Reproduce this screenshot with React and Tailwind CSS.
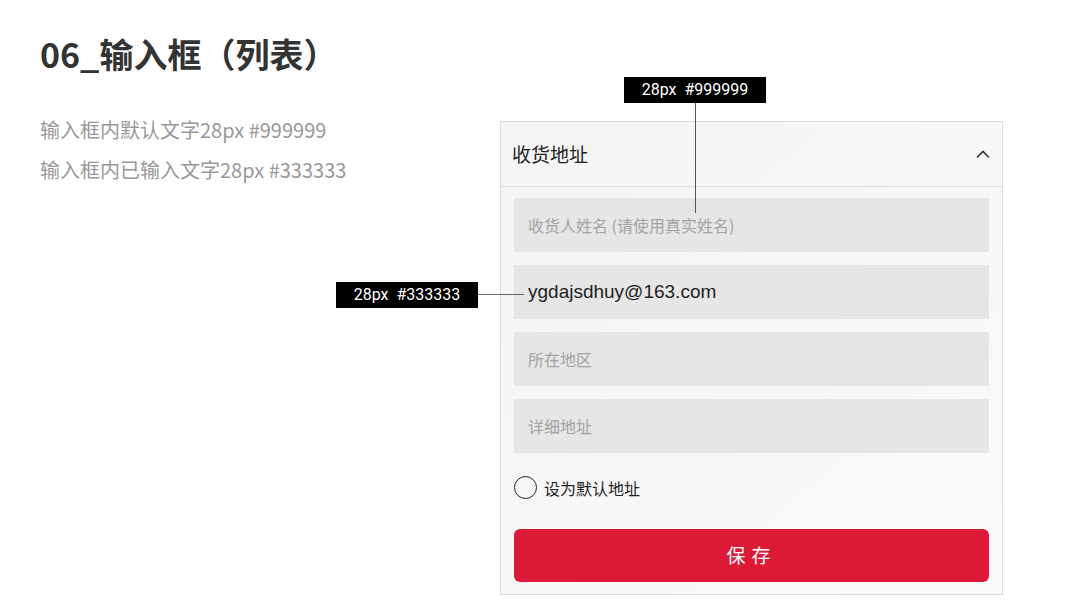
import React from 'react'

const cjk = { fontFamily: '"Noto Sans CJK SC", sans-serif' }

const Field = ({ text, filled }) => (
  <div className="h-[54px] bg-[#e6e6e6] flex items-center pl-[14px]">
    {filled ? (
      <span className="text-[19px] text-[#222]" style={{ fontFamily: '"Liberation Sans", Arial, sans-serif' }}>{text}</span>
    ) : (
      <span className="text-[16px] text-[#a3a3a3]">{text}</span>
    )}
  </div>
)

const Tag = ({ children, className }) => (
  <div
    className={`absolute bg-black text-white text-[16px] h-[26px] w-[142px] flex items-center justify-center ${className}`}
    style={{ fontFamily: 'Roboto, "Liberation Sans", sans-serif' }}
  >
    {children}
  </div>
)

export default function App() {
  return (
    <div className="relative w-[1066px] h-[603px] bg-white flex overflow-hidden" style={cjk}>
      <div className="w-[500px] pl-[40px] pt-[32px]">
        <h1 className="text-[34px] font-bold text-[#333] leading-[44px]">06_输入框（列表）</h1>
        <div className="mt-[34px] text-[20px] text-[#999] leading-[40px]">
          <p>输入框内默认文字28px #999999</p>
          <p>输入框内已输入文字28px #333333</p>
        </div>
      </div>

      <div className="pt-[121px]">
        <div className="w-[503px] border border-[#dcdcdc] bg-gradient-to-br from-[#f4f4f4] to-[#fafafa]">
          <div className="h-[65px] border-b border-[#dedede] flex items-center justify-between pl-[11px] pr-[12px]">
            <span className="text-[19px] text-[#222]">收货地址</span>
            <svg width="14" height="9" viewBox="0 0 14 9" fill="none">
              <path d="M1 7.5 7 1.5l6 6" stroke="#333" strokeWidth="1.6" />
            </svg>
          </div>
          <div className="px-[13px] pt-[11px] pb-[12px]">
            <div className="flex flex-col gap-[13px]">
              <Field text="收货人姓名 (请使用真实姓名)" />
              <Field text="ygdajsdhuy@163.com" filled />
              <Field text="所在地区" />
              <Field text="详细地址" />
            </div>
            <div className="flex items-center gap-[7px] mt-[23px] h-[23px]">
              <span className="w-[23px] h-[23px] rounded-full border-[1.5px] border-[#222]" />
              <span className="text-[16px] text-[#222]">设为默认地址</span>
            </div>
            <button className="mt-[30px] w-full h-[53px] rounded-[6px] bg-[#dc1a37] text-white text-[19px] tracking-[6px] flex items-center justify-center">
              保存
            </button>
          </div>
        </div>
      </div>

      <Tag className="left-[624px] top-[77px]">28px&nbsp;&nbsp;#999999</Tag>
      <div className="absolute left-[695px] top-[103px] w-px h-[110px] bg-[#555]" />
      <Tag className="left-[336px] top-[282px]">28px&nbsp;&nbsp;#333333</Tag>
      <div className="absolute left-[478px] top-[294px] w-[46px] h-px bg-[#666]" />
    </div>
  )
}
